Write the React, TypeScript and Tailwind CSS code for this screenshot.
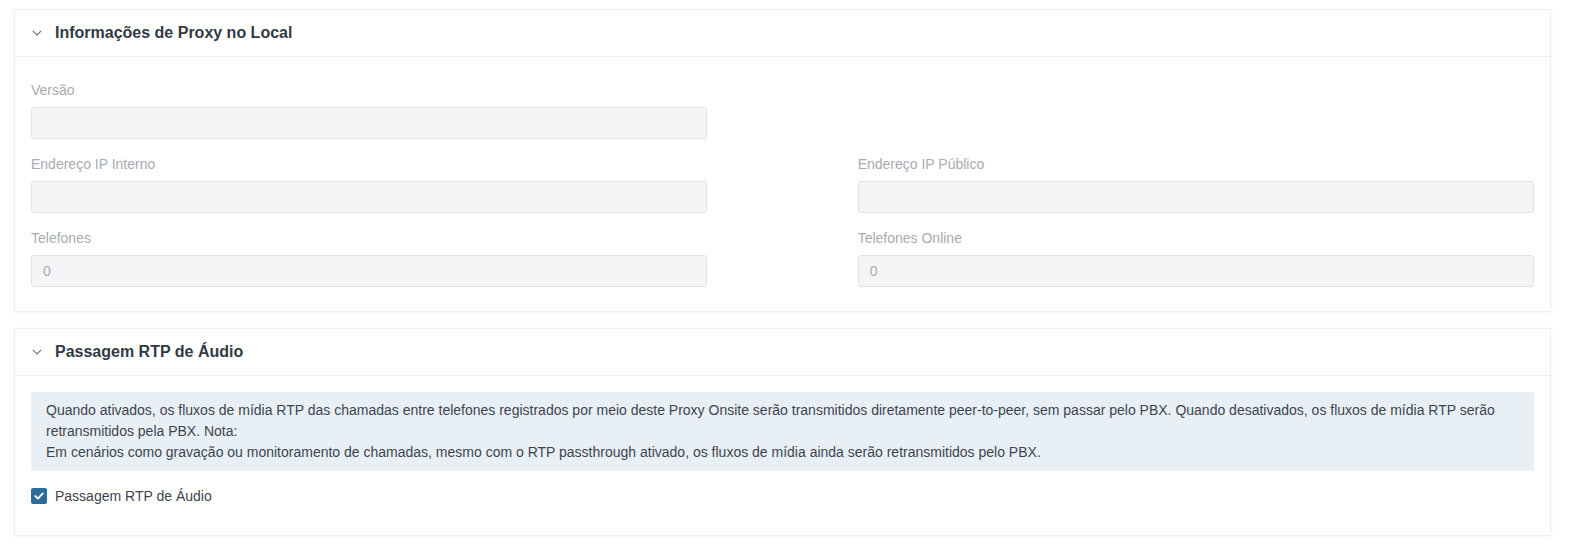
import React from "react";

const Chevron = () => (
  <svg width="10" height="6" viewBox="0 0 10 6" className="shrink-0">
    <polyline points="0.8,0.8 5,5 9.2,0.8" fill="none" stroke="#6b6f76" strokeWidth="1.1" />
  </svg>
);

const Header = ({ title }: { title: string }) => (
  <div className="h-[47px] border-b border-[#ebeef2] flex items-center pl-[17px] gap-[13px]">
    <Chevron />
    <span className="text-[16px] font-bold text-[#323a45]">{title}</span>
  </div>
);

const Field = ({ label, value }: { label: string; value?: string }) => (
  <div className="flex flex-col">
    <div className="text-[14px] leading-[20px] text-[#a8abb2] mb-[7px]">{label}</div>
    <div className="h-8 border border-[#dfe2e7] bg-[#f4f5f7] rounded-[3px] flex items-center pl-[11px] text-[14px] text-[#a8abb2]">
      {value}
    </div>
  </div>
);

export default function App() {
  return (
    <div className="bg-white min-h-[551px] pt-[9px] pl-[14px] pr-[18px] font-['Liberation_Sans',Arial,sans-serif]">
      <div className="border border-[#ebeef2] bg-white shadow-[0_1px_4px_rgba(0,0,0,0.04)]">
        <Header title="Informações de Proxy no Local" />
        <div className="px-4 pt-[23px] pb-[24px] grid grid-cols-[45%_45%] justify-between gap-y-[15px]">
          <Field label="Versão" />
          <div />
          <Field label="Endereço IP Interno" />
          <Field label="Endereço IP Público" />
          <Field label="Telefones" value="0" />
          <Field label="Telefones Online" value="0" />
        </div>
      </div>

      <div className="mt-4 border border-[#ebeef2] bg-white shadow-[0_1px_4px_rgba(0,0,0,0.04)]">
        <Header title="Passagem RTP de Áudio" />
        <div className="px-4 pt-4 pb-[29px]">
          <div className="bg-[#e8f0f6] rounded-[2px] px-[15px] py-2 text-[14px] leading-[21px] text-[#3e4450]">
            Quando ativados, os fluxos de mídia RTP das chamadas entre telefones registrados por meio deste Proxy Onsite serão transmitidos diretamente peer-to-peer, sem passar pelo PBX. Quando desativados, os fluxos de mídia RTP serão retransmitidos pela PBX. Nota:
            <br />
            Em cenários como gravação ou monitoramento de chamadas, mesmo com o RTP passthrough ativado, os fluxos de mídia ainda serão retransmitidos pelo PBX.
          </div>
          <div className="mt-[15px] h-5 flex items-center gap-2">
            <div className="w-4 h-4 rounded-[2px] bg-[#2b6c98] flex items-center justify-center">
              <svg width="10" height="8" viewBox="0 0 10 8">
                <polyline points="1.2,4 4,6.6 8.8,1.4" fill="none" stroke="white" strokeWidth="1.8" strokeLinecap="round" strokeLinejoin="round" />
              </svg>
            </div>
            <span className="text-[14px] text-[#3e4450]">Passagem RTP de Áudio</span>
          </div>
        </div>
      </div>
    </div>
  );
}
